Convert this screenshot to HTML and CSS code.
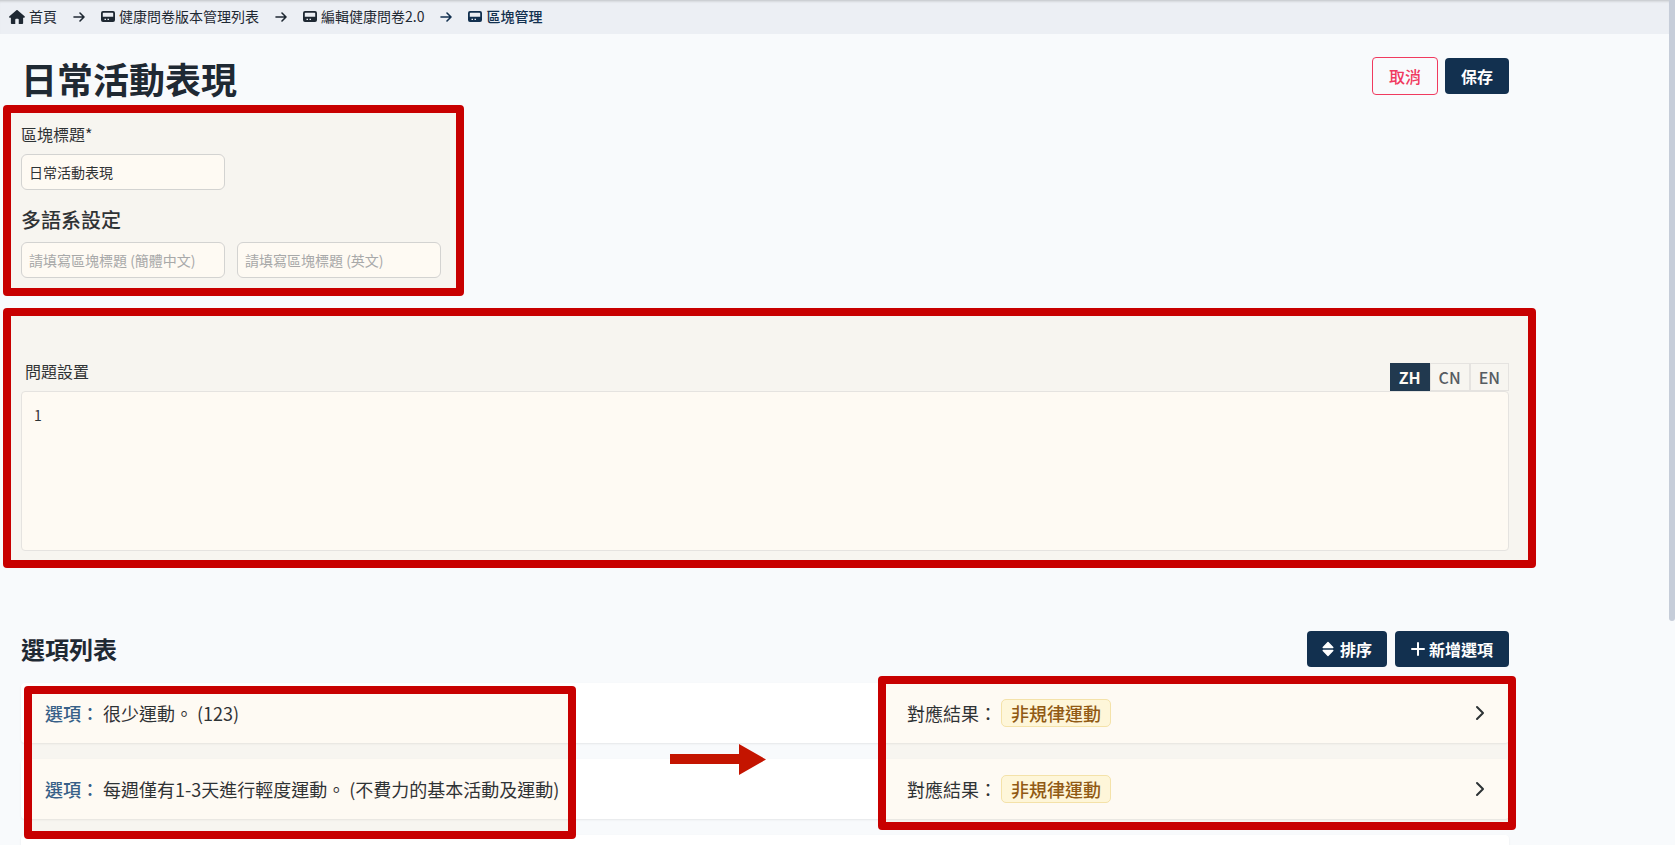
FILE: index.html
```html
<!DOCTYPE html>
<html lang="zh-Hant">
<head>
  <meta charset="UTF-8">
  <meta name="viewport" content="width=device-width, initial-scale=1.0">
  <title>區塊管理</title>
  <link rel="stylesheet" href="styles.css">
</head>
<body>
  <svg class="sprite" aria-hidden="true">
    <symbol id="home" viewBox="0 0 576 512">
      <path d="M575.8 255.5c0 18-15 32.100-32 32.100h-32l.7 160.200c0 2.700-.2 5.400-.5 8.100V472c0 22.100-17.900 40-40 40H352V352c0-17.700-14.300-32-32-32h-64c-17.700 0-32 14.300-32 32v160H104c-22.100 0-40-17.900-40-40V287.600H32c-18 0-32-14-32-32.100 0-9 3-17 10-24L266.400 8c7-7 15-8 22-8s15 2 21 7l255.400 224.500c8 7 12 15 11 24z"/>
    </symbol>
    <symbol id="arrow" viewBox="0 0 12 12">
      <path d="M1 6h10M7 2l4 4-4 4" fill="none" stroke="currentColor" stroke-width="1.600" stroke-linecap="round" stroke-linejoin="round"/>
    </symbol>
    <symbol id="panel" viewBox="0 0 14 11">
      <path fill-rule="evenodd" d="M2 0h10a2 2 0 0 1 2 2v7a2 2 0 0 1-2 2H2a2 2 0 0 1-2-2V2a2 2 0 0 1 2-2zm.5 1.800a.7.7 0 0 0-.7.7v3.200h10.400V2.500a.7.7 0 0 0-.7-.7zM3.500 7.800v1.200h1.500V7.800zm3 0v1.200h1.500V7.800z"/>
    </symbol>
    <symbol id="chevron" viewBox="0 0 10 16">
      <path d="M2 2l6 6-6 6" fill="none" stroke="currentColor" stroke-width="2" stroke-linecap="round" stroke-linejoin="round"/>
    </symbol>
  </svg>

  <!-- Breadcrumb -->
  <nav class="breadcrumb">
    <a href="#"><svg class="icon-home"><use href="#home"/></svg>首頁</a>
    <svg class="icon-arrow"><use href="#arrow"/></svg>
    <a href="#"><svg class="icon-panel"><use href="#panel"/></svg>健康問卷版本管理列表</a>
    <svg class="icon-arrow"><use href="#arrow"/></svg>
    <a href="#"><svg class="icon-panel"><use href="#panel"/></svg>編輯健康問卷2.0</a>
    <svg class="icon-arrow current"><use href="#arrow"/></svg>
    <a href="#" class="current"><svg class="icon-panel"><use href="#panel"/></svg>區塊管理</a>
  </nav>

  <main class="page">
    <header class="page-header">
      <h1>日常活動表現</h1>
      <div class="actions">
        <button type="button" class="btn btn-outline">取消</button>
        <button type="button" class="btn">保存</button>
      </div>
    </header>

    <!-- Block title -->
    <section class="title-form">
      <label for="block-title">區塊標題*</label>
      <input id="block-title" type="text" value="日常活動表現">
      <h2>多語系設定</h2>
      <div class="lang-fields">
        <input type="text" placeholder="請填寫區塊標題 (簡體中文)" aria-label="區塊標題 (簡體中文)">
        <input type="text" placeholder="請填寫區塊標題 (英文)" aria-label="區塊標題 (英文)">
      </div>
      <div class="mark mark-title"></div>
    </section>

    <!-- Question -->
    <section class="question">
      <div class="question-header">
        <label for="question">問題設置</label>
        <div class="tabs">
          <button type="button" class="tab active">ZH</button>
          <button type="button" class="tab">CN</button>
          <button type="button" class="tab">EN</button>
        </div>
      </div>
      <textarea id="question">1</textarea>
      <div class="mark mark-question"></div>
    </section>

    <!-- Options -->
    <section class="options">
      <div class="options-header">
        <h2>選項列表</h2>
        <div class="actions">
          <button type="button" class="btn btn-sort"><svg class="icon-sort" viewBox="0 0 12 16"><path d="M6 1.500l4.800 5H1.200zM6 14.500l4.800-5H1.200z" stroke="currentColor" stroke-width="1.400" stroke-linejoin="round"/></svg>排序</button>
          <button type="button" class="btn btn-add"><svg class="icon-plus" viewBox="0 0 14 14"><path d="M7 1v12M1 7h12" stroke="currentColor" stroke-width="2" stroke-linecap="round"/></svg>新增選項</button>
        </div>
      </div>
      <div class="option-list">
        <a href="#" class="option">
          <span class="option-text"><b>選項：</b>很少運動。 (123)</span>
          <span class="option-result">對應結果：<span class="badge">非規律運動</span></span>
          <svg class="icon-chevron"><use href="#chevron"/></svg>
        </a>
        <a href="#" class="option">
          <span class="option-text"><b>選項：</b>每週僅有1-3天進行輕度運動。 (不費力的基本活動及運動)</span>
          <span class="option-result">對應結果：<span class="badge">非規律運動</span></span>
          <svg class="icon-chevron"><use href="#chevron"/></svg>
        </a>
        <a href="#" class="option"></a>
        <div class="mark mark-option"></div>
        <svg class="mark-arrow" viewBox="0 0 96 31"><path d="M0 10h69V0l27 15.500L69 31V20H0z"/></svg>
        <div class="mark mark-result"></div>
      </div>
    </section>
  </main>
  <div class="scroll-thumb"></div>
</body>
</html>
```
FILE: styles.css
```css
* {
  box-sizing: border-box;
}
html {
  overflow: hidden;
}
body {
  margin: 0;
  height: 100vh;
  overflow: hidden;
  position: relative;
  font-family: "Noto Sans CJK TC", sans-serif;
  font-size: 16px;
  line-height: 24px;
  color: #1f2933;
  background: #f8fafc;
}
h1, h2 {
  margin: 0;
}
a {
  color: inherit;
  text-decoration: none;
}
svg {
  fill: currentColor;
  flex-shrink: 0;
}
.sprite {
  display: none;
}

/* Breadcrumb */
.breadcrumb {
  display: flex;
  align-items: center;
  gap: 16px;
  height: 34px;
  margin-right: 6px;
  padding: 0 9px 2px;
  font-size: 14px;
  background: #eceff4;
  box-shadow: inset 0 3px 3px -2px rgba(0, 0, 0, 0.2);
}
.breadcrumb a {
  display: flex;
  align-items: center;
  gap: 4px;
}
.breadcrumb svg {
  margin-top: 1px;
}
.breadcrumb .current {
  color: #12304f;
  font-weight: 500;
}
.icon-home {
  width: 16px;
  height: 14px;
}
.icon-arrow {
  width: 12px;
  height: 12px;
}
.icon-panel {
  width: 14px;
  height: 11px;
}

/* Page */
.page {
  padding: 23px 166px 0 21px;
}
.page-header {
  display: flex;
  justify-content: space-between;
  height: 65px;
}
h1 {
  font-size: 36px;
  line-height: 42px;
  font-weight: 700;
}
.actions {
  display: flex;
  align-items: center;
  align-self: flex-start;
  gap: 8px;
}
.page-header .actions {
  gap: 7px;
}
.btn {
  display: flex;
  align-items: center;
  height: 36px;
  padding: 0 16px;
  border: 0;
  border-radius: 4px;
  font: inherit;
  font-weight: 700;
  color: #fff;
  background: #12304f;
}
.btn-outline {
  height: 38px;
  border: 1px solid #f03a5f;
  color: #f03a5f;
  font-weight: 500;
  background: transparent;
}
.btn-sort {
  gap: 6px;
  padding: 0 15px;
}
.btn-add {
  gap: 4px;
}
.icon-sort {
  width: 12px;
  height: 16px;
}
.icon-plus {
  width: 14px;
  height: 14px;
}

/* Block title */
.title-form {
  position: relative;
}
.title-form label {
  display: block;
  margin-bottom: 8px;
}
.title-form h2 {
  margin: 16px 0 8px;
  font-size: 20px;
  line-height: 28px;
  font-weight: 500;
}
input {
  display: block;
  width: 204px;
  height: 36px;
  padding: 0 7px;
  border: 1px solid #d1d5db;
  border-radius: 6px;
  font: inherit;
  font-size: 14px;
  color: inherit;
  background: #fff;
}
input::placeholder {
  color: #a3a8b0;
}
.lang-fields {
  display: flex;
  gap: 12px;
}

/* Question */
.question {
  position: relative;
  margin-top: 80px;
}
.question-header {
  display: flex;
  justify-content: space-between;
  align-items: flex-end;
  height: 33px;
}
.question-header label {
  padding: 0 4px;
  line-height: 26px;
  align-self: flex-start;
}
.tabs {
  display: flex;
}
.tab {
  height: 28px;
  padding: 0 8px;
  border: 1px solid #e5e7eb;
  font: inherit;
  font-weight: 500;
  color: #4b5563;
  background: transparent;
}
.tab.active {
  border-color: #12304f;
  font-weight: 700;
  color: #fff;
  background: #12304f;
}
textarea {
  display: block;
  width: 100%;
  height: 160px;
  padding: 11px 12px;
  border: 1px solid #e5e7eb;
  border-radius: 4px;
  font: inherit;
  font-size: 14px;
  color: inherit;
  background: #fff;
  resize: none;
}

/* Options */
.options {
  margin-top: 80px;
}
.options-header {
  display: flex;
  justify-content: space-between;
  margin-bottom: 16px;
}
.options-header h2 {
  font-size: 24px;
  line-height: 36px;
  font-weight: 700;
}
.option-list {
  position: relative;
  display: flex;
  flex-direction: column;
  gap: 16px;
}
.option {
  display: flex;
  align-items: center;
  height: 60px;
  padding: 0 24px;
  border-radius: 4px;
  font-size: 18px;
  background: #fff;
  box-shadow: 0 1px 2px rgba(0, 0, 0, 0.08);
}
.option-text {
  flex: 1;
}
.option-text b {
  margin-right: 4px;
  font-weight: 500;
  color: #2a5a8c;
}
.option-result {
  display: flex;
  align-items: center;
  flex: 0 0 568px;
  gap: 4px;
}
.badge {
  padding: 0 9px;
  border: 1px solid #f5e6b0;
  border-radius: 5px;
  font-weight: 500;
  line-height: 26px;
  color: #8a5310;
  background: #fffbe3;
}
.icon-chevron {
  width: 10px;
  height: 16px;
}

/* Highlight marks */
.mark {
  position: absolute;
  border: 8px solid #c80000;
  border-radius: 4px;
  background: rgba(240, 190, 90, 0.07);
  pointer-events: none;
}
.mark-title {
  top: -17px;
  left: -18px;
  width: 461px;
  height: 191px;
}
.mark-question {
  top: -50px;
  right: -27px;
  bottom: -17px;
  left: -18px;
}
.mark-option {
  top: 3px;
  left: 3px;
  width: 552px;
  height: 153px;
}
.mark-result {
  top: -7px;
  right: -7px;
  width: 638px;
  height: 154px;
}
.mark-arrow {
  position: absolute;
  top: 61px;
  left: 649px;
  width: 96px;
  height: 31px;
  fill: #c41400;
}

.scroll-thumb {
  position: absolute;
  top: 0;
  right: 0;
  width: 6px;
  height: 621px;
  border-radius: 0 0 3px 3px;
  background: #c6cdd9;
}
```
